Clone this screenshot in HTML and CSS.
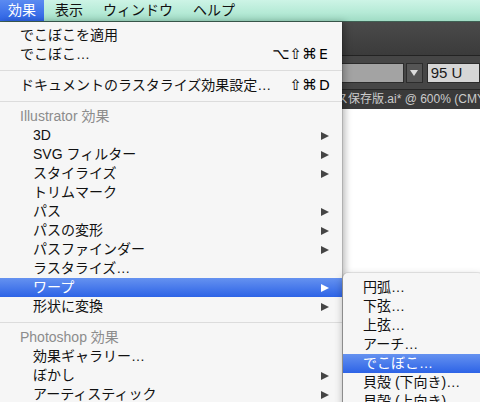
FILE: index.html
```html
<!DOCTYPE html>
<html lang="ja">
<head>
<meta charset="utf-8">
<title>効果メニュー</title>
<link rel="stylesheet" href="styles.css">
</head>
<body>
<div class="screen">
  <div class="menubar">
    <span class="mb-item active">効果</span>
    <span class="mb-item">表示</span>
    <span class="mb-item">ウィンドウ</span>
    <span class="mb-item">ヘルプ</span>
  </div>
  <div class="app">
    <div class="app-head"></div>
    <div class="controlbar">
      <div class="field"></div>
      <div class="dd-btn"><span class="dd-arrow"></span></div>
      <div class="numbox">95 U</div>
    </div>
    <div class="doctab">ス保存版.ai* @ 600% (CMYK/プレビュー)</div>
    <div class="canvas"></div>
  </div>

  <div class="menu">
    <div class="item"><span class="label">でこぼこを適用</span></div>
    <div class="item"><span class="label">でこぼこ…</span><span class="sc"><span class="mods">⌥⇧⌘</span><span class="key">E</span></span></div>
    <div class="sep"></div>
    <div class="item"><span class="label">ドキュメントのラスタライズ効果設定…</span><span class="sc"><span class="mods">⇧⌘</span><span class="key">D</span></span></div>
    <div class="sep"></div>
    <div class="header">Illustrator 効果</div>
    <div class="item sub"><span class="label">3D</span><span class="arrow"></span></div>
    <div class="item sub"><span class="label">SVG フィルター</span><span class="arrow"></span></div>
    <div class="item sub"><span class="label">スタイライズ</span><span class="arrow"></span></div>
    <div class="item sub"><span class="label">トリムマーク</span></div>
    <div class="item sub"><span class="label">パス</span><span class="arrow"></span></div>
    <div class="item sub"><span class="label">パスの変形</span><span class="arrow"></span></div>
    <div class="item sub"><span class="label">パスファインダー</span><span class="arrow"></span></div>
    <div class="item sub"><span class="label">ラスタライズ…</span></div>
    <div class="item sub sel"><span class="label">ワープ</span><span class="arrow"></span></div>
    <div class="item sub"><span class="label">形状に変換</span><span class="arrow"></span></div>
    <div class="sep"></div>
    <div class="header">Photoshop 効果</div>
    <div class="item sub"><span class="label">効果ギャラリー…</span></div>
    <div class="item sub"><span class="label">ぼかし</span><span class="arrow"></span></div>
    <div class="item sub"><span class="label">アーティスティック</span><span class="arrow"></span></div>
  </div>

  <div class="submenu">
    <div class="item"><span class="label">円弧…</span></div>
    <div class="item"><span class="label">下弦…</span></div>
    <div class="item"><span class="label">上弦…</span></div>
    <div class="item"><span class="label">アーチ…</span></div>
    <div class="item sel"><span class="label">でこぼこ…</span></div>
    <div class="item"><span class="label">貝殻 (下向き)…</span></div>
    <div class="item"><span class="label">貝殻 (上向き)…</span></div>
  </div>
</div>
</body>
</html>
```

FILE: styles.css
```css
html, body {
  margin: 0;
  padding: 0;
  background: #ffffff;
}

.screen {
  position: relative;
  width: 480px;
  height: 402px;
  overflow: hidden;
  font-family: "Liberation Sans", "Noto Sans CJK JP", sans-serif;
  font-size: 14px;
  color: #111;
}

/* ---------- menu bar ---------- */
.menubar {
  display: flex;
  height: 21px;
  border-bottom: 1px solid #3f6154;
  background: linear-gradient(to bottom, #cdf4e6 0%, #b5ead6 60%, #a0dcc5 100%);
}

.mb-item {
  padding: 0 8px;
  margin-right: 4px;
  line-height: 21px;
  color: #111;
}

.mb-item.active {
  margin-right: 3px;
  color: #fff;
  background: linear-gradient(to bottom, #5b8bf1 0%, #2d63e5 100%);
}

/* ---------- application behind ---------- */
.app {
  display: flex;
  flex-direction: column;
}

.app-head {
  height: 33px;
  background: linear-gradient(to bottom, #4a4a4a 0%, #3b3b3b 100%);
  border-bottom: 1px solid #232323;
}

.controlbar {
  display: flex;
  align-items: flex-start;
  height: 34px;
  padding-top: 7px;
  box-sizing: border-box;
  background: #464646;
  border-bottom: 1px solid #262626;
}

.field {
  margin-left: 250px;
  width: 175px;
  height: 20px;
  box-sizing: border-box;
  background: #a3a3a3;
  border: 1px solid #2c2c2c;
}

.dd-btn {
  margin-left: 2px;
  width: 19px;
  height: 20px;
  box-sizing: border-box;
  background: #555;
  border: 1px solid #2c2c2c;
  display: flex;
  align-items: center;
  justify-content: center;
}

.dd-arrow {
  width: 0;
  height: 0;
  border-top: 6px solid #dcdcdc;
  border-left: 4px solid transparent;
  border-right: 4px solid transparent;
}

.numbox {
  margin-left: 4px;
  width: 60px;
  height: 20px;
  box-sizing: border-box;
  background: #d6d6d6;
  border: 1px solid #2c2c2c;
  padding-left: 3px;
  line-height: 18px;
  font-size: 15px;
  color: #1a1a1a;
}

.doctab {
  height: 19px;
  line-height: 19px;
  padding-left: 336px;
  white-space: nowrap;
  background: #3a3a3a;
  color: #cbcbcb;
  font-size: 12px;
}

.canvas {
  height: 300px;
  background: #ffffff;
}

/* ---------- menus ---------- */
.menu {
  position: absolute;
  left: 0;
  top: 22px;
  width: 342px;
  height: 400px;
  padding-top: 4px;
  box-sizing: border-box;
  background: #f6f6f6;
  box-shadow: 1px 0 0 rgba(0, 0, 0, 0.12), 3px 0 7px rgba(0, 0, 0, 0.28);
}

.submenu {
  position: absolute;
  left: 343px;
  top: 273px;
  width: 140px;
  height: 160px;
  padding-top: 5px;
  box-sizing: border-box;
  background: #f6f6f6;
  border-radius: 5px 5px 0 0;
  box-shadow: 0 0 0 1px rgba(0, 0, 0, 0.08), 0 3px 9px rgba(0, 0, 0, 0.3);
}

.item {
  display: flex;
  align-items: center;
  height: 19px;
  line-height: 19px;
  padding: 0 13px 0 20px;
  white-space: nowrap;
}

.item.sub {
  padding-left: 33px;
}

.label {
  flex: 1;
}

.item.sel {
  color: #fff;
  background: linear-gradient(to bottom, #6592f0 0%, #2d63e6 100%);
}

.arrow {
  width: 0;
  height: 0;
  border-left: 8px solid #454545;
  border-top: 4.5px solid transparent;
  border-bottom: 4.5px solid transparent;
}

.item.sel .arrow {
  border-left-color: #fff;
}

.sc {
  display: flex;
  font-family: "DejaVu Sans", sans-serif;
  font-size: 14px;
  color: #000;
}

.mods {
  margin-right: 2px;
  font-size: 15px;
}

.key {
  width: 10px;
}

.sep {
  height: 1px;
  margin: 6px 0 5px;
  background: #dcdcdc;
}

.header {
  height: 19px;
  line-height: 19px;
  padding-left: 20px;
  color: #8c8c8c;
}
```
